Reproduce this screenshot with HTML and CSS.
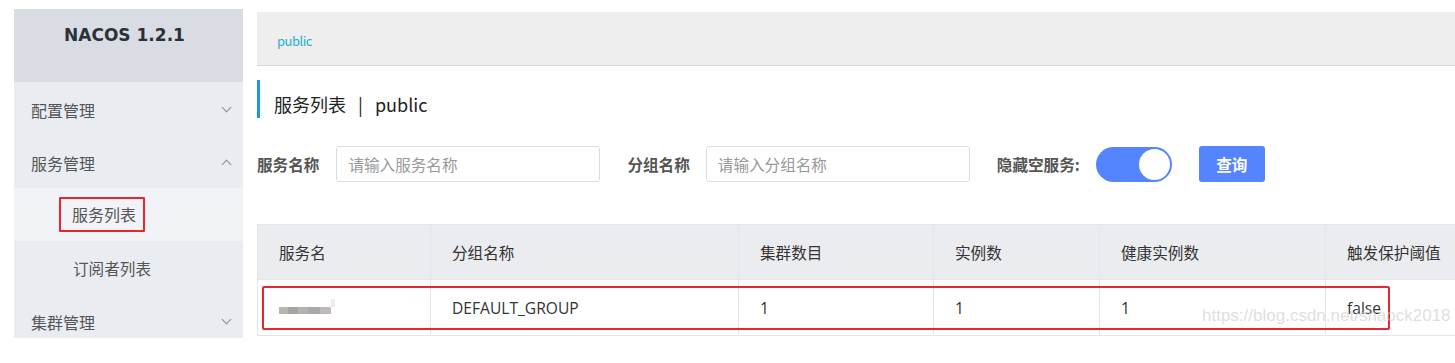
FILE: index.html
```html
<!DOCTYPE html>
<html lang="zh-CN">
<head>
    <meta charset="UTF-8">
    <title>Nacos - 服务列表</title>
    <link rel="stylesheet" href="styles.css">
</head>
<body>
    <div class="layout">
        <aside class="sidebar">
            <div class="logo">NACOS 1.2.1</div>
            <ul class="menu">
                <li class="menu-item">配置管理 <span class="arrow down"></span></li>
                <li class="menu-item">服务管理 <span class="arrow up"></span></li>
                <li class="sub-item active"><span class="mark">服务列表</span></li>
                <li class="sub-item">订阅者列表</li>
                <li class="menu-item">集群管理 <span class="arrow down"></span></li>
            </ul>
        </aside>

        <main class="main">
            <div class="ns-bar"><span class="ns">public</span></div>

            <h2 class="page-title">服务列表 <span class="sep">|</span> public</h2>

            <div class="search-row">
                <label class="field-label">服务名称</label>
                <input class="field" type="text" placeholder="请输入服务名称">
                <label class="field-label gap">分组名称</label>
                <input class="field" type="text" placeholder="请输入分组名称">
                <label class="field-label gap">隐藏空服务:</label>
                <span class="switch"><span class="knob"></span></span>
                <button class="btn">查询</button>
            </div>

            <div class="table-wrap">
                <table class="list">
                    <colgroup>
                        <col style="width: 173px">
                        <col style="width: 308px">
                        <col style="width: 195px">
                        <col style="width: 166px">
                        <col style="width: 226px">
                        <col>
                    </colgroup>
                    <tr>
                        <th>服务名</th>
                        <th>分组名称</th>
                        <th>集群数目</th>
                        <th>实例数</th>
                        <th>健康实例数</th>
                        <th>触发保护阈值</th>
                    </tr>
                    <tr>
                        <td><span class="blurred"></span></td>
                        <td>DEFAULT_GROUP</td>
                        <td>1</td>
                        <td>1</td>
                        <td>1</td>
                        <td>false</td>
                    </tr>
                </table>
                <div class="row-mark"></div>
                <div class="watermark">https://blog.csdn.net/shaock2018</div>
            </div>
        </main>
    </div>
</body>
</html>
```

FILE: styles.css
```css
body {
    margin: 0;
    background: #fff;
    font-family: "Noto Sans CJK SC", "Open Sans", sans-serif;
    color: #333;
    overflow: hidden;
}
.layout {
    display: flex;
    align-items: flex-start;
}
.sidebar {
    width: 229px;
    height: 329px;
    margin: 9px 0 0 14px;
    background: #e9ecf0;
    overflow: hidden;
    flex-shrink: 0;
}
.logo {
    height: 73px;
    box-sizing: border-box;
    padding: 16px 8px 0 0;
    background: #d9dde3;
    text-align: center;
    font-family: "DejaVu Sans", sans-serif;
    font-weight: bold;
    font-size: 17px;
    color: #2b313a;
}
.menu {
    list-style: none;
    margin: 0;
    padding: 0;
}
.menu-item,
.sub-item {
    height: 53px;
    display: flex;
    align-items: center;
    font-size: 16px;
    color: #555;
}
.menu-item {
    justify-content: space-between;
    padding: 2px 13px 0 17px;
    box-sizing: border-box;
}
.sub-item {
    padding-left: 45px;
}
.sub-item.active {
    background: #f1f3f6;
}
.sub-item:not(.active) {
    padding-left: 59px;
    font-size: 15.6px;
}
.mark {
    border: 2px solid #e8262f;
    padding: 5px 7px 6px 11px;
    line-height: 20px;
    border-radius: 1px;
    font-size: 16px;
}
.arrow {
    width: 6px;
    height: 6px;
    border-right: 1.2px solid #8a8f99;
    border-bottom: 1.2px solid #8a8f99;
}
.arrow.down {
    transform: rotate(45deg);
    margin-top: -4px;
}
.arrow.up {
    transform: rotate(-135deg);
    margin-top: 4px;
}

.main {
    flex: 1;
    margin: 12px 0 0 14px;
    overflow: hidden;
    min-width: 0;
}
.ns-bar {
    height: 54px;
    background: #eeeeee;
    border-bottom: 1px solid #d6d6d6;
    display: flex;
    align-items: center;
    padding-left: 20px;
    padding-top: 4px;
    box-sizing: border-box;
    width: 1300px;
}
.ns {
    font-size: 13px;
    color: #1fb0d8;
    letter-spacing: -0.5px;
}
.page-title {
    margin: 14px 0 0 0;
    height: 38px;
    box-sizing: border-box;
    border-left: 3px solid #1a9ad6;
    padding: 11px 0 0 14px;
    font-size: 18px;
    font-weight: normal;
    color: #222;
    line-height: 26px;
}
.sep {
    margin: 0 8px;
}
.search-row {
    display: flex;
    align-items: center;
    margin-top: 28px;
    height: 36px;
}
.field-label {
    font-size: 15.6px;
    font-weight: bold;
    color: #555;
    margin-right: 17px;
}
.field-label.gap {
    margin-left: 27px;
    margin-right: 16px;
}
.field {
    width: 264px;
    height: 36px;
    box-sizing: border-box;
    border: 1px solid #dcdee3;
    border-radius: 3px;
    padding: 0 11px;
    font-family: "Noto Sans CJK SC", sans-serif;
    font-size: 15.6px;
    outline: none;
}
.field::placeholder {
    color: #999;
}
.switch {
    width: 76px;
    height: 35px;
    box-sizing: border-box;
    border-radius: 18px;
    background: #5584ff;
    margin-left: 0;
    display: flex;
    justify-content: flex-end;
    align-items: center;
    padding-right: 2px;
}
.knob {
    width: 31px;
    height: 31px;
    border-radius: 50%;
    background: #fff;
}
.btn {
    margin-left: 27px;
    width: 66px;
    height: 36px;
    border: none;
    border-radius: 3px;
    background: #5584ff;
    color: #fff;
    font-family: "Noto Sans CJK SC", sans-serif;
    font-size: 15.6px;
    font-weight: bold;
}

.table-wrap {
    position: relative;
    margin-top: 42px;
    width: 1300px;
}
.list {
    border-collapse: collapse;
    width: 1300px;
    table-layout: fixed;
}
.list th,
.list td {
    border: 1px solid #e4e5ea;
    padding: 0 0 0 21px;
    text-align: left;
    font-size: 15.6px;
    color: #333;
}
.list th {
    height: 54px;
    background: #ebecf0;
    font-weight: normal;
}
.list td {
    height: 55px;
    font-family: "Open Sans", "Noto Sans CJK SC", sans-serif;
}
.blurred {
    display: inline-block;
    width: 52px;
    height: 7px;
    margin-top: 6px;
    background: linear-gradient(90deg, #b8b4ae 0 18%, #a5a6a2 18% 36%, #b2b3ae 36% 56%, #a8aaa7 56% 78%, #c0b9bb 78% 100%);
    position: relative;
}
.blurred::after {
    content: "";
    position: absolute;
    left: 52px;
    top: -8px;
    width: 4px;
    height: 8px;
    background: #e8ecf6;
}
.row-mark {
    position: absolute;
    left: 5px;
    top: 62px;
    width: 1124px;
    height: 40px;
    border: 2px solid #e8262f;
    border-radius: 2px;
}
.watermark {
    position: absolute;
    left: 945px;
    top: 82px;
    font-family: "Liberation Sans", Arial, sans-serif;
    font-size: 17px;
    color: rgba(200, 200, 200, 0.6);
    pointer-events: none;
}
```
